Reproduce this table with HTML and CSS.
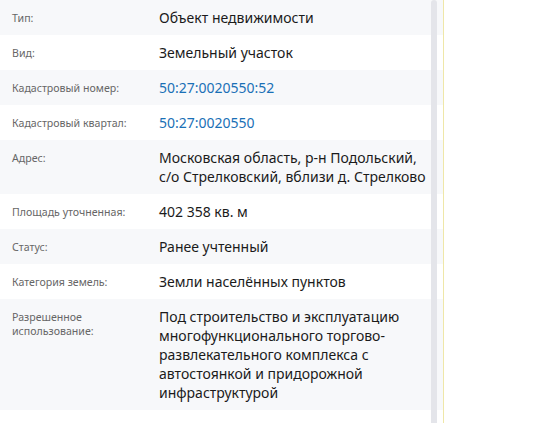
FILE: index.html
```html
<!DOCTYPE html>
<html lang="ru">
<head>
    <meta charset="UTF-8">
    <meta name="viewport" content="width=device-width, initial-scale=1.0">
    <title>Объект недвижимости</title>
    <link rel="stylesheet" href="styles.css">
</head>
<body>
    <div class="panel">
        <div class="info">
            <div class="row">
                <div class="label">Тип:</div>
                <div class="value">Объект недвижимости</div>
            </div>
            <div class="row">
                <div class="label">Вид:</div>
                <div class="value">Земельный участок</div>
            </div>
            <div class="row">
                <div class="label">Кадастровый номер:</div>
                <div class="value"><a href="#">50:27:0020550:52</a></div>
            </div>
            <div class="row">
                <div class="label">Кадастровый квартал:</div>
                <div class="value"><a href="#">50:27:0020550</a></div>
            </div>
            <div class="row">
                <div class="label">Адрес:</div>
                <div class="value">Московская область, р-н Подольский, с/о Стрелковский, вблизи д. Стрелково</div>
            </div>
            <div class="row">
                <div class="label">Площадь уточненная:</div>
                <div class="value">402 358 кв. м</div>
            </div>
            <div class="row">
                <div class="label">Статус:</div>
                <div class="value">Ранее учтенный</div>
            </div>
            <div class="row">
                <div class="label">Категория земель:</div>
                <div class="value">Земли населённых пунктов</div>
            </div>
            <div class="row">
                <div class="label">Разрешенное использование:</div>
                <div class="value">Под строительство и эксплуатацию многофункционального торгово-развлекательного комплекса с автостоянкой и придорожной инфраструктурой</div>
            </div>
        </div>
        <div class="scroll-thumb"></div>
    </div>
</body>
</html>
```

FILE: styles.css
```css
body {
    margin: 0;
    padding: 0;
    background: #fff;
    font-family: "Noto Sans", "Open Sans", sans-serif;
    color: #1b1b1b;
}
.panel {
    position: relative;
    width: 443px;
    height: 423px;
    border-right: 1px solid #efe7a8;
    overflow: hidden;
}
.row {
    display: grid;
    grid-template-columns: 135px 1fr;
    column-gap: 12px;
    padding: 8px 12px;
}
.row:nth-child(odd) {
    background: #f7f8fa;
}
.label {
    font-size: 10.6px;
    line-height: 14px;
    padding-top: 3px;
    color: #666;
}
.value {
    font-size: 14px;
    line-height: 19px;
}
.value a {
    color: #1a70b6;
    text-decoration: none;
}
.scroll-thumb {
    position: absolute;
    top: 0;
    left: 431px;
    width: 6px;
    height: 440px;
    border-radius: 3px;
    background: #e4e5ea;
}
```
